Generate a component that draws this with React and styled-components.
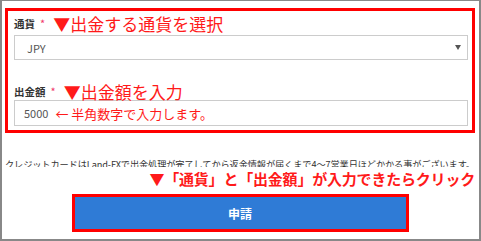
import React from 'react';
import styled, { createGlobalStyle } from 'styled-components';

const GlobalStyle = createGlobalStyle`
    body {
        margin: 0;
        background: #fff;
        font-family: "Noto Sans CJK JP", "Noto Sans", sans-serif;
    }
`;

function App() {
    return (
        <Frame>
            <GlobalStyle />
            <RedBox>
                <LabelRow height={24}>
                    <Label>通貨</Label>
                    <Required>*</Required>
                    <Hint>▼出金する通貨を選択</Hint>
                </LabelRow>
                <Field>
                    <Value left={12} grow>
                        JPY
                    </Value>
                    <Caret />
                </Field>
                <LabelRow height={18} top={22}>
                    <Label>出金額</Label>
                    <Required>*</Required>
                    <Hint>▼出金額を入力</Hint>
                </LabelRow>
                <Field tall>
                    <Value left={9}>5000</Value>
                    <InlineHint>← 半角数字で入力します。</InlineHint>
                </Field>
            </RedBox>
            <Note>
                クレジットカードはLand-FXで出金処理が完了してから返金情報が届くまで4～7営業日ほどかかる事がございます。
            </Note>
            <ClickHint>▼「通貨」と「出金額」が入力できたらクリック</ClickHint>
            <ButtonOutline>
                <SubmitButton type="button">申請</SubmitButton>
            </ButtonOutline>
        </Frame>
    );
}

export default App;

const Frame = styled.div`
    width: 481px;
    height: 241px;
    box-sizing: border-box;
    border: 2px solid #888;
    border-top-width: 1px;
    padding: 7px 4px 0 3px;
    background: #fff;
    overflow: hidden;
`;
const RedBox = styled.div`
    border: 3px solid #ff0000;
    padding: 0 4px 4px 6px;
`;
const LabelRow = styled.div`
    display: flex;
    align-items: center;
    height: ${(p) => p.height}px;
    margin-top: ${(p) => p.top || 0}px;
`;
const Label = styled.span`
    font-size: 10.5px;
    font-weight: bold;
    color: #333;
`;
const Required = styled.span`
    font-size: 11px;
    color: #f0386b;
    margin-left: 5px;
`;
const Hint = styled.span`
    font-size: 17px;
    color: #ff1a1a;
    margin-left: 8px;
    line-height: 1;
`;
const Field = styled.div`
    display: flex;
    align-items: center;
    height: ${(p) => (p.tall ? 26 : 25)}px;
    box-sizing: border-box;
    border: 1px solid #ccc;
    background: #fff;
    padding-right: 6px;
`;
const Value = styled.span`
    font-size: 11px;
    color: #555;
    padding-left: ${(p) => p.left}px;
    flex: ${(p) => (p.grow ? 1 : 'none')};
`;
const Caret = styled.span`
    width: 0;
    height: 0;
    border-left: 3px solid transparent;
    border-right: 3px solid transparent;
    border-top: 5px solid #555;
`;
const InlineHint = styled.span`
    font-size: 13px;
    color: #ff1a1a;
    margin-left: 7px;
`;
const Note = styled.div`
    margin-top: 25px;
    height: 9px;
    overflow: hidden;
    font-size: 9.2px;
    line-height: 12px;
    letter-spacing: -0.1px;
    white-space: nowrap;
    color: #333;
`;
const ClickHint = styled.div`
    height: 23px;
    line-height: 23px;
    text-align: right;
    font-size: 15px;
    font-weight: bold;
    color: #ff1a1a;
    white-space: nowrap;
    letter-spacing: -0.2px;
`;
const ButtonOutline = styled.div`
    width: 337px;
    margin: 4px auto 0;
    box-sizing: border-box;
    border: 3px solid #ff0000;
`;
const SubmitButton = styled.button`
    display: flex;
    align-items: center;
    justify-content: center;
    width: 100%;
    height: 32px;
    border: none;
    background: #2f7bd6;
    color: #fff;
    font-family: "Noto Sans CJK JP", sans-serif;
    font-size: 12px;
    font-weight: bold;
    cursor: pointer;
`;
